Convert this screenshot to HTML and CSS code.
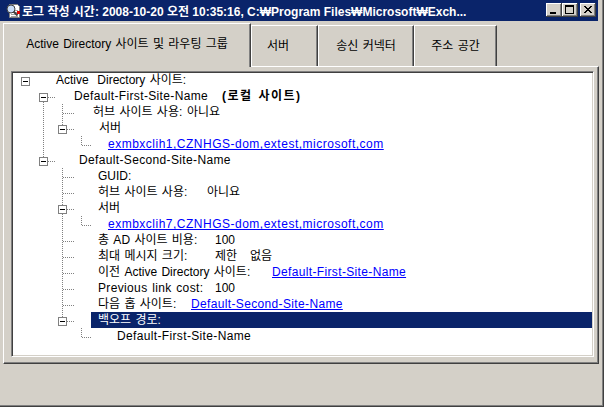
FILE: index.html
```html
<!DOCTYPE html>
<html lang="ko">
<head>
<meta charset="utf-8">
<title>로그</title>
<link rel="stylesheet" href="styles.css">
</head>
<body>
<div class="window">
  <div class="titlebar">
    <svg class="appicon" width="16" height="16" viewBox="0 0 16 16">
      <path d="M4.5 1.5h8l2 2v11h-10z" fill="#fff" stroke="#808080"/>
      <path d="M9 7.5h4M9 9.5h4M6 11.5h7M6 13.5h7" stroke="#a0a0a0"/>
      <circle cx="6" cy="6" r="4" fill="#c8dcf8" stroke="#404040"/>
      <path d="M8.5 8.5l4 4" stroke="#404040" stroke-width="2"/>
      <rect x="12" y="8" width="3" height="3" fill="#e00000"/>
    </svg>
    <span class="title">로그 작성 시간: 2008-10-20 오전 10:35:16, C:₩Program Files₩Microsoft₩Exch...</span>
    <div class="capbtns">
      <span class="capbtn"><svg width="16" height="14" viewBox="0 0 16 14"><rect x="4" y="9" width="6" height="2"/></svg></span>
      <span class="capbtn"><svg width="16" height="14" viewBox="0 0 16 14"><path fill-rule="evenodd" d="M3 2h9v9h-9z M4 4v6h7v-6z"/></svg></span>
      <span class="capbtn close"><svg width="16" height="14" viewBox="0 0 16 14"><path transform="translate(4 3)" d="M0 0h2v1h-2z M6 0h2v1h-2z M1 1h2v1h-2z M5 1h2v1h-2z M2 2h4v1h-4z M3 3h2v1h-2z M2 4h4v1h-4z M1 5h2v1h-2z M5 5h2v1h-2z M0 6h2v1h-2z M6 6h2v1h-2z"/></svg></span>
    </div>
  </div>
  <div class="client">
    <div class="tabs">
      <div class="tab active">Active Directory 사이트 및 라우팅 그룹</div>
      <div class="tab t2">서버</div>
      <div class="tab t3">송신 커넥터</div>
      <div class="tab t4">주소 공간</div>
    </div>
    <div class="panel">
      <div class="tree">
        <ul class="rows">
          <li class="row">
            <svg class="g" width="43" height="16"><rect class="bx" x="8.5" y="5.5" width="8" height="8"/><path class="mn" d="M10 9.5H15"/></svg>
            <span>Active&nbsp; Directory 사이트:</span>
          </li>
          <li class="row">
            <svg class="g" width="61" height="16"><path class="d" d="M30.5 14V16M35 9.5H43"/><rect class="bx" x="26.5" y="5.5" width="8" height="8"/><path class="mn" d="M28 9.5H33"/></svg>
            <span class="lbl ls w148">Default-First-Site-Name</span><span class="bold">(로컬 사이트)</span>
          </li>
          <li class="row">
            <svg class="g" width="78" height="16"><path class="d" d="M30.5 0V16M49.5 0V16M50 9.5H61"/></svg>
            <span class="lbl p2 w94">허브 사이트 사용:</span><span>아니요</span>
          </li>
          <li class="row">
            <svg class="g" width="78" height="16"><path class="d" d="M30.5 0V16M49.5 0V5M54 9.5H61"/><rect class="bx" x="45.5" y="5.5" width="8" height="8"/><path class="mn" d="M47 9.5H52"/></svg>
            <span class="p8">서버</span>
          </li>
          <li class="row">
            <svg class="g" width="78" height="16"><path class="d" d="M30.5 0V16M68.5 0V10M69 9.5H79"/></svg>
            <span class="p17"><a class="link long">exmbxclih1,CZNHGS-dom,extest,microsoft,com</a></span>
          </li>
          <li class="row">
            <svg class="g" width="66" height="16"><path class="d" d="M30.5 0V5M35 9.5H43"/><rect class="bx" x="26.5" y="5.5" width="8" height="8"/><path class="mn" d="M28 9.5H33"/></svg>
            <span class="ls">Default-Second-Site-Name</span>
          </li>
          <li class="row">
            <svg class="g" width="78" height="16"><path class="d" d="M49.5 0V16M50 9.5H61"/></svg>
            <span class="p7">GUID:</span>
          </li>
          <li class="row">
            <svg class="g" width="78" height="16"><path class="d" d="M49.5 0V16M50 9.5H61"/></svg>
            <span class="lbl p7 w109">허브 사이트 사용:</span><span>아니요</span>
          </li>
          <li class="row">
            <svg class="g" width="78" height="16"><path class="d" d="M49.5 0V5M49.5 14V16M54 9.5H61"/><rect class="bx" x="45.5" y="5.5" width="8" height="8"/><path class="mn" d="M47 9.5H52"/></svg>
            <span class="p7">서버</span>
          </li>
          <li class="row">
            <svg class="g" width="78" height="16"><path class="d" d="M49.5 0V16M68.5 0V10M69 9.5H79"/></svg>
            <span class="p17"><a class="link long">exmbxclih7,CZNHGS-dom,extest,microsoft,com</a></span>
          </li>
          <li class="row">
            <svg class="g" width="78" height="16"><path class="d" d="M49.5 0V16M50 9.5H61"/></svg>
            <span class="lbl p7 w117">총 AD 사이트 비용:</span><span>100</span>
          </li>
          <li class="row">
            <svg class="g" width="78" height="16"><path class="d" d="M49.5 0V16M50 9.5H61"/></svg>
            <span class="lbl p7 w117">최대 메시지 크기:</span><span>제한&nbsp;&nbsp; 없음</span>
          </li>
          <li class="row">
            <svg class="g" width="78" height="16"><path class="d" d="M49.5 0V16M50 9.5H61"/></svg>
            <span class="lbl p7 w174">이전 Active Directory 사이트:</span><a class="link">Default-First-Site-Name</a>
          </li>
          <li class="row">
            <svg class="g" width="78" height="16"><path class="d" d="M49.5 0V16M50 9.5H61"/></svg>
            <span class="lbl ls p7 w117">Previous link cost:</span><span>100</span>
          </li>
          <li class="row">
            <svg class="g" width="78" height="16"><path class="d" d="M49.5 0V16M50 9.5H61"/></svg>
            <span class="lbl p7 w93">다음 홉 사이트:</span><a class="link">Default-Second-Site-Name</a>
          </li>
          <li class="row">
            <svg class="g" width="78" height="16"><path class="d" d="M49.5 0V5M54 9.5H61"/><rect class="bx" x="45.5" y="5.5" width="8" height="8"/><path class="mn" d="M47 9.5H52"/></svg>
            <span class="sel">백오프 경로:</span>
          </li>
          <li class="row">
            <svg class="g" width="78" height="16"><path class="d" d="M68.5 0V10M69 9.5H79"/></svg>
            <span class="p26 ls">Default-First-Site-Name</span>
          </li>
        </ul>
      </div>
    </div>
  </div>
</div>
</body>
</html>
```

FILE: styles.css
```css
html, body {
  margin: 0;
  padding: 0;
}
body {
  background: #D4D0C8;
  font-family: "Liberation Sans", "Noto Sans CJK KR", sans-serif;
  font-size: 12px;
  line-height: 16px;
  color: #000;
  word-spacing: 1px;
}
.window {
  width: 604px;
  height: 407px;
  box-sizing: border-box;
  border-right: 1px solid #404040;
  border-bottom: 1px solid #404040;
  box-shadow: inset -1px -1px 0 #808080;
  overflow: hidden;
}
.titlebar {
  height: 21px;
  margin-right: 5px;
  background: #0A246A;
  display: flex;
  align-items: flex-start;
  padding-left: 5px;
}
.appicon {
  flex: none;
  margin-top: 3px;
  display: block;
}
.title {
  flex: 1;
  min-width: 0;
  margin-left: 1px;
  margin-top: 4px;
  color: #fff;
  font-weight: bold;
  white-space: nowrap;
  overflow: hidden;
  word-spacing: 0;
}
.capbtns {
  display: flex;
  margin-top: 3px;
  padding-right: 2px;
  flex: none;
}
.capbtn {
  display: block;
  width: 16px;
  height: 14px;
  background: #D4D0C8;
  box-shadow: inset -1px -1px 0 #404040, inset 1px 1px 0 #fff, inset -2px -2px 0 #808080;
}
.capbtn svg {
  display: block;
  shape-rendering: crispEdges;
}
.capbtn.close {
  margin-left: 2px;
}
.client {
  padding: 2px 0 0 3px;
}
.tabs {
  display: flex;
  align-items: flex-end;
  height: 43px;
}
.tab {
  box-sizing: border-box;
  height: 41px;
  border-top: 1px solid #fff;
  border-left: 1px solid #fff;
  border-right: 1px solid #404040;
  box-shadow: inset -1px 0 0 #808080;
  padding-top: 12px;
  text-align: center;
  white-space: nowrap;
}
.tab.active {
  width: 248px;
  height: 44px;
  margin-bottom: -1px;
  position: relative;
  z-index: 1;
  background: #D4D0C8;
}
.tab.t2 {
  width: 67px;
  text-align: left;
  padding-left: 15px;
}
.tab.t3 {
  width: 96px;
}
.tab.t4 {
  width: 83px;
}
.panel {
  box-sizing: border-box;
  width: 596px;
  height: 298px;
  border-top: 1px solid #fff;
  border-left: 1px solid #fff;
  border-right: 1px solid #404040;
  border-bottom: 1px solid #404040;
  box-shadow: inset -1px -1px 0 #808080;
  padding: 4px 4px 6px 7px;
}
.tree {
  box-sizing: border-box;
  height: 100%;
  background: #fff;
  border-top: 1px solid #808080;
  border-left: 1px solid #808080;
  border-right: 1px solid #fff;
  border-bottom: 1px solid #fff;
  box-shadow: inset 1px 1px 0 #404040, inset -1px -1px 0 #D4D0C8;
  padding: 0 1px 1px 1px;
  overflow: hidden;
}
.rows {
  list-style: none;
  margin: 0;
  padding: 0;
}
.row {
  display: flex;
  align-items: flex-start;
  height: 16px;
  white-space: nowrap;
}
.g {
  flex: none;
  display: block;
  shape-rendering: crispEdges;
}
.g .d {
  fill: none;
  stroke: #808080;
  stroke-dasharray: 1 1;
}
.g .bx {
  fill: #fff;
  stroke: #808080;
}
.g .mn {
  fill: none;
  stroke: #000;
}
.lbl {
  flex: none;
  display: inline-block;
}
.w93 { width: 93px; }
.w94 { width: 94px; }
.w109 { width: 109px; }
.w117 { width: 117px; }
.w148 { width: 148px; }
.w174 { width: 174px; }
.p2 { padding-left: 2px; }
.p7 { padding-left: 7px; }
.p8 { padding-left: 8px; }
.p17 { padding-left: 17px; }
.p26 { padding-left: 26px; }
.ls { letter-spacing: 0.35px; }
.bold {
  font-weight: bold;
  letter-spacing: 1.5px;
}
.link {
  color: #0000FF;
  text-decoration: underline;
  text-decoration-skip-ink: none;
  letter-spacing: 0.35px;
  cursor: pointer;
}
.link.long {
  letter-spacing: 0.5px;
}
.sel {
  flex: 1;
  background: #0A246A;
  color: #fff;
  padding-left: 7px;
}
```
